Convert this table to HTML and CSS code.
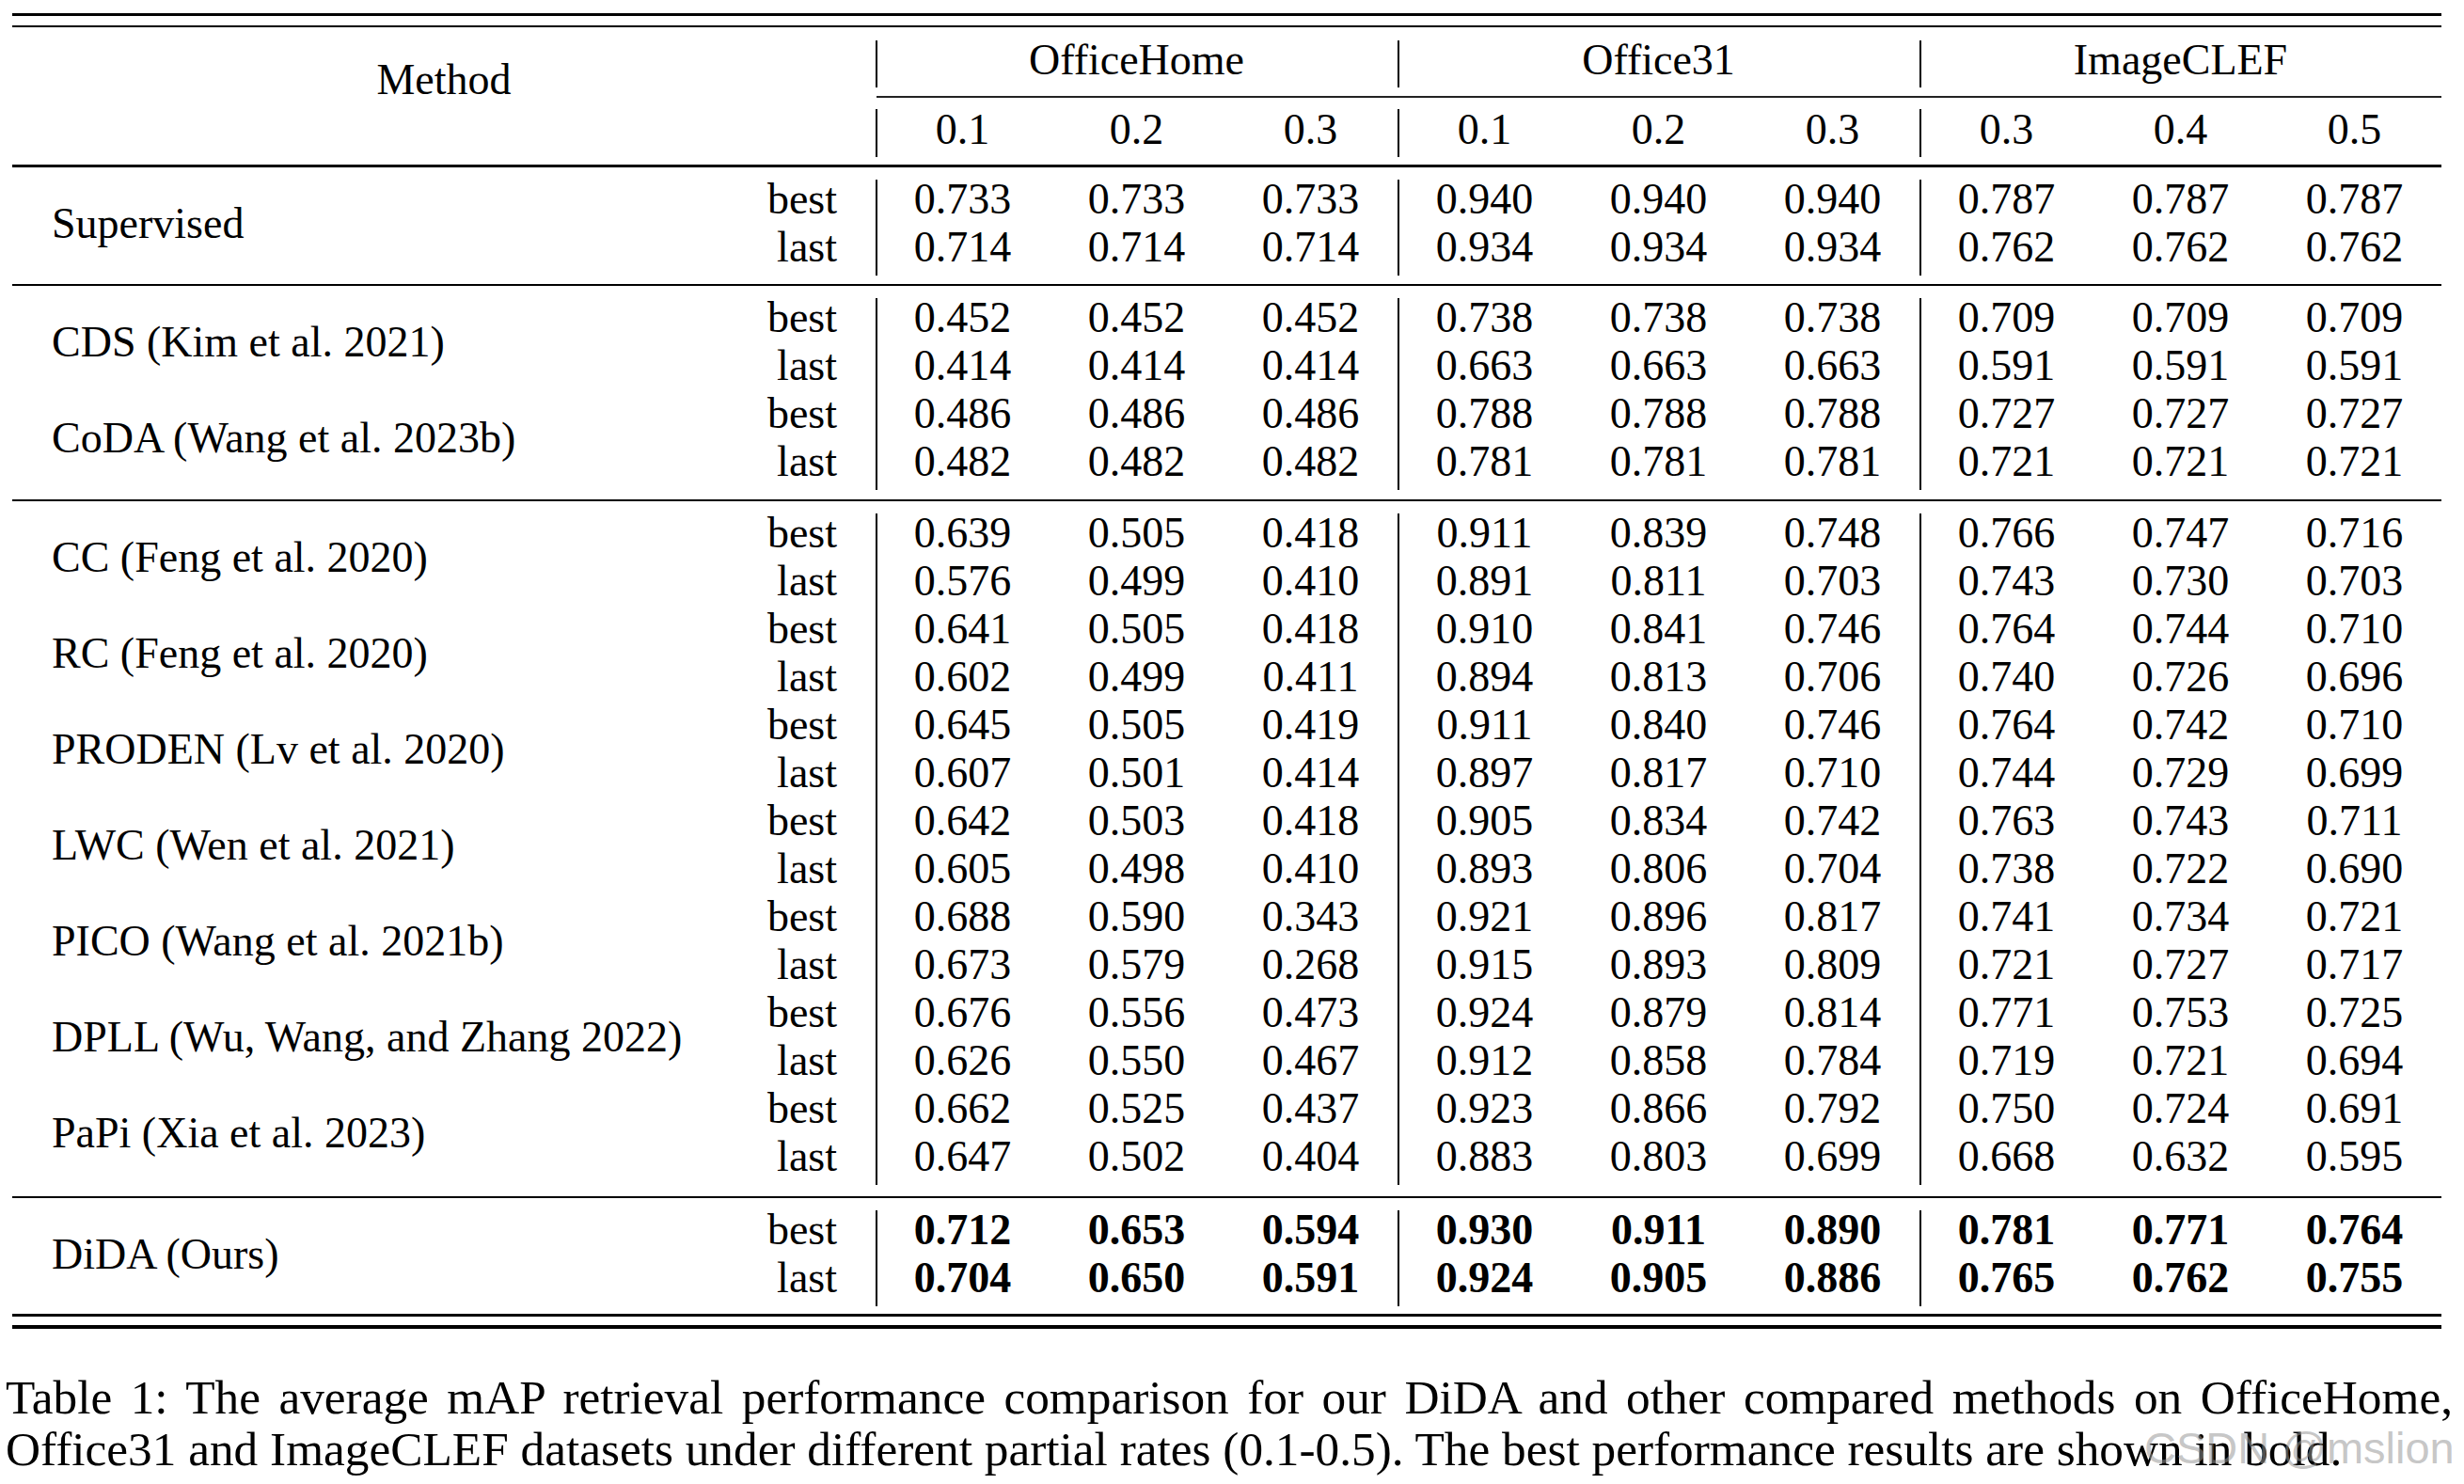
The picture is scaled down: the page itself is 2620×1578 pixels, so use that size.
FILE: index.html
```html
<!DOCTYPE html>
<html lang="en">
<head>
<meta charset="utf-8">
<title>Table 1</title>
<link rel="stylesheet" href="styles.css">
</head>
<body>
<div class="page">
<table class="tbl">
<colgroup>
<col class="c-method"><col class="c-bl">
<col class="c-d"><col class="c-d"><col class="c-d">
<col class="c-d"><col class="c-d"><col class="c-d">
<col class="c-d"><col class="c-d"><col class="c-d">
</colgroup>
<tbody>
<tr class="sep sep-top"><td colspan="11"><div class="rule r3 gap-b10"></div><div class="rule r2"></div></td></tr>
<tr class="h1">
<th colspan="2" rowspan="3" class="method-h">Method</th>
<th colspan="3" class="gl">OfficeHome</th>
<th colspan="3" class="gl">Office31</th>
<th colspan="3" class="gl">ImageCLEF</th>
</tr>
<tr class="cmid"><td colspan="9"><div class="rule r-cmid"></div></td></tr>
<tr class="h2">
<th class="gl">0.1</th><th>0.2</th><th>0.3</th>
<th class="gl">0.1</th><th>0.2</th><th>0.3</th>
<th class="gl">0.3</th><th>0.4</th><th>0.5</th>
</tr>
<tr class="sep sep-a"><td colspan="11"><div class="rule r3"></div></td></tr>

<tr class="d"><td class="m" rowspan="2">Supervised</td><td class="bl">best</td><td class="gl">0.733</td><td>0.733</td><td>0.733</td><td class="gl">0.940</td><td>0.940</td><td>0.940</td><td class="gl">0.787</td><td>0.787</td><td>0.787</td></tr>
<tr class="d"><td class="bl">last</td><td class="gl">0.714</td><td>0.714</td><td>0.714</td><td class="gl">0.934</td><td>0.934</td><td>0.934</td><td class="gl">0.762</td><td>0.762</td><td>0.762</td></tr>

<tr class="sep sep-b"><td colspan="11"><div class="rule r2"></div></td></tr>

<tr class="d"><td class="m" rowspan="2">CDS (Kim et al. 2021)</td><td class="bl">best</td><td class="gl">0.452</td><td>0.452</td><td>0.452</td><td class="gl">0.738</td><td>0.738</td><td>0.738</td><td class="gl">0.709</td><td>0.709</td><td>0.709</td></tr>
<tr class="d"><td class="bl">last</td><td class="gl">0.414</td><td>0.414</td><td>0.414</td><td class="gl">0.663</td><td>0.663</td><td>0.663</td><td class="gl">0.591</td><td>0.591</td><td>0.591</td></tr>
<tr class="d"><td class="m" rowspan="2">CoDA (Wang et al. 2023b)</td><td class="bl">best</td><td class="gl">0.486</td><td>0.486</td><td>0.486</td><td class="gl">0.788</td><td>0.788</td><td>0.788</td><td class="gl">0.727</td><td>0.727</td><td>0.727</td></tr>
<tr class="d"><td class="bl">last</td><td class="gl">0.482</td><td>0.482</td><td>0.482</td><td class="gl">0.781</td><td>0.781</td><td>0.781</td><td class="gl">0.721</td><td>0.721</td><td>0.721</td></tr>

<tr class="sep sep-c"><td colspan="11"><div class="rule r2"></div></td></tr>

<tr class="d"><td class="m" rowspan="2">CC (Feng et al. 2020)</td><td class="bl">best</td><td class="gl">0.639</td><td>0.505</td><td>0.418</td><td class="gl">0.911</td><td>0.839</td><td>0.748</td><td class="gl">0.766</td><td>0.747</td><td>0.716</td></tr>
<tr class="d"><td class="bl">last</td><td class="gl">0.576</td><td>0.499</td><td>0.410</td><td class="gl">0.891</td><td>0.811</td><td>0.703</td><td class="gl">0.743</td><td>0.730</td><td>0.703</td></tr>
<tr class="d"><td class="m" rowspan="2">RC (Feng et al. 2020)</td><td class="bl">best</td><td class="gl">0.641</td><td>0.505</td><td>0.418</td><td class="gl">0.910</td><td>0.841</td><td>0.746</td><td class="gl">0.764</td><td>0.744</td><td>0.710</td></tr>
<tr class="d"><td class="bl">last</td><td class="gl">0.602</td><td>0.499</td><td>0.411</td><td class="gl">0.894</td><td>0.813</td><td>0.706</td><td class="gl">0.740</td><td>0.726</td><td>0.696</td></tr>
<tr class="d"><td class="m" rowspan="2">PRODEN (Lv et al. 2020)</td><td class="bl">best</td><td class="gl">0.645</td><td>0.505</td><td>0.419</td><td class="gl">0.911</td><td>0.840</td><td>0.746</td><td class="gl">0.764</td><td>0.742</td><td>0.710</td></tr>
<tr class="d"><td class="bl">last</td><td class="gl">0.607</td><td>0.501</td><td>0.414</td><td class="gl">0.897</td><td>0.817</td><td>0.710</td><td class="gl">0.744</td><td>0.729</td><td>0.699</td></tr>
<tr class="d"><td class="m" rowspan="2">LWC (Wen et al. 2021)</td><td class="bl">best</td><td class="gl">0.642</td><td>0.503</td><td>0.418</td><td class="gl">0.905</td><td>0.834</td><td>0.742</td><td class="gl">0.763</td><td>0.743</td><td>0.711</td></tr>
<tr class="d"><td class="bl">last</td><td class="gl">0.605</td><td>0.498</td><td>0.410</td><td class="gl">0.893</td><td>0.806</td><td>0.704</td><td class="gl">0.738</td><td>0.722</td><td>0.690</td></tr>
<tr class="d"><td class="m" rowspan="2">PICO (Wang et al. 2021b)</td><td class="bl">best</td><td class="gl">0.688</td><td>0.590</td><td>0.343</td><td class="gl">0.921</td><td>0.896</td><td>0.817</td><td class="gl">0.741</td><td>0.734</td><td>0.721</td></tr>
<tr class="d"><td class="bl">last</td><td class="gl">0.673</td><td>0.579</td><td>0.268</td><td class="gl">0.915</td><td>0.893</td><td>0.809</td><td class="gl">0.721</td><td>0.727</td><td>0.717</td></tr>
<tr class="d"><td class="m" rowspan="2">DPLL (Wu, Wang, and Zhang 2022)</td><td class="bl">best</td><td class="gl">0.676</td><td>0.556</td><td>0.473</td><td class="gl">0.924</td><td>0.879</td><td>0.814</td><td class="gl">0.771</td><td>0.753</td><td>0.725</td></tr>
<tr class="d"><td class="bl">last</td><td class="gl">0.626</td><td>0.550</td><td>0.467</td><td class="gl">0.912</td><td>0.858</td><td>0.784</td><td class="gl">0.719</td><td>0.721</td><td>0.694</td></tr>
<tr class="d"><td class="m" rowspan="2">PaPi (Xia et al. 2023)</td><td class="bl">best</td><td class="gl">0.662</td><td>0.525</td><td>0.437</td><td class="gl">0.923</td><td>0.866</td><td>0.792</td><td class="gl">0.750</td><td>0.724</td><td>0.691</td></tr>
<tr class="d"><td class="bl">last</td><td class="gl">0.647</td><td>0.502</td><td>0.404</td><td class="gl">0.883</td><td>0.803</td><td>0.699</td><td class="gl">0.668</td><td>0.632</td><td>0.595</td></tr>

<tr class="sep sep-d"><td colspan="11"><div class="rule r2"></div></td></tr>

<tr class="d best-row"><td class="m" rowspan="2">DiDA (Ours)</td><td class="bl">best</td><td class="gl">0.712</td><td>0.653</td><td>0.594</td><td class="gl">0.930</td><td>0.911</td><td>0.890</td><td class="gl">0.781</td><td>0.771</td><td>0.764</td></tr>
<tr class="d best-row"><td class="bl">last</td><td class="gl">0.704</td><td>0.650</td><td>0.591</td><td class="gl">0.924</td><td>0.905</td><td>0.886</td><td class="gl">0.765</td><td>0.762</td><td>0.755</td></tr>

<tr class="sep sep-end"><td colspan="11"><div class="rule r25 gap-b95"></div><div class="rule r4"></div></td></tr>
</tbody>
</table>

<p class="caption"><span class="cap-line1">Table 1: The average mAP retrieval performance comparison for our DiDA and other compared methods on OfficeHome,</span><span class="cap-line2">Office31 and ImageCLEF datasets under different partial rates (0.1-0.5). The best performance results are shown in bold.</span></p>
</div>
<div class="watermark">CSDN @mslion</div>
</body>
</html>
```

FILE: styles.css
```css
* {
  box-sizing: border-box;
}

html, body {
  margin: 0;
  padding: 0;
  background: #ffffff;
}

body {
  color: #000000;
  font-family: "Liberation Serif", "Times New Roman", serif;
  position: relative;
  width: 2620px;
  height: 1578px;
  overflow: hidden;
}

.page {
  padding: 14px 0 0 13px;
}

/* ---------- table ---------- */
.tbl {
  border-collapse: collapse;
  border-spacing: 0;
  table-layout: fixed;
  width: 2583px;
  font-size: 46px;
  line-height: 41px;
}

.tbl td,
.tbl th {
  padding: 0;
  font-weight: normal;
  white-space: nowrap;
}

col.c-method { width: 763px; }
col.c-bl { width: 155px; }
col.c-d { width: 185px; }

.rule {
  background: #000000;
  width: 100%;
}

.r2 { height: 2px; }
.r25 { height: 2.5px; }
.r3 { height: 3px; }
.r4 { height: 4px; }
.r-cmid { height: 1.5px; background: #222222; }

.gap-b10 { margin-bottom: 10px; }
.gap-b95 { margin-bottom: 9.5px; }

.sep-top td { padding: 0 0 14px; }
.sep-a td { padding: 8px 0 13px; }
.sep-b td { padding: 9px 0 13px; }
.sep-c td { padding: 10px 0 13px; }
.sep-d td { padding: 12px 0 13px; }
.sep-end td { padding: 8px 0 0; }

/* vertical group separators */
.gl {
  box-shadow: inset 2px 0 0 #000000;
}

/* header */
.h1 th {
  height: 50px;
  vertical-align: top;
  text-align: center;
}

.h2 th {
  height: 51px;
  vertical-align: top;
  text-align: center;
  padding-top: 1px;
}

.cmid td {
  height: 23px;
  padding: 9px 0 0 1px;
  vertical-align: top;
}

.tbl th.method-h {
  vertical-align: top;
  text-align: center;
  padding-top: 21px;
  box-shadow: none;
}

/* data rows */
.d td {
  height: 51px;
  vertical-align: top;
  text-align: center;
}

.d td.m {
  text-align: left;
  padding-left: 42px;
  padding-bottom: 10px;
  vertical-align: middle;
}

.d td.bl {
  text-align: right;
  padding-right: 41px;
}

.best-row td {
  font-weight: bold;
}

.best-row td.m,
.best-row td.bl {
  font-weight: normal;
}

/* caption */
.caption {
  margin: 45px 0 0 -7px;
  width: 2602px;
  font-size: 51.3px;
  line-height: 55px;
}

.cap-line1 {
  display: block;
  text-align: justify;
  text-align-last: justify;
  white-space: nowrap;
}

.cap-line2 {
  display: block;
  text-align: left;
  white-space: nowrap;
}

.watermark {
  position: absolute;
  left: 2280px;
  top: 1516px;
  font-family: "Liberation Sans", Arial, sans-serif;
  font-size: 47px;
  line-height: 1;
  color: rgba(150, 150, 150, 0.55);
  white-space: nowrap;
}
```
